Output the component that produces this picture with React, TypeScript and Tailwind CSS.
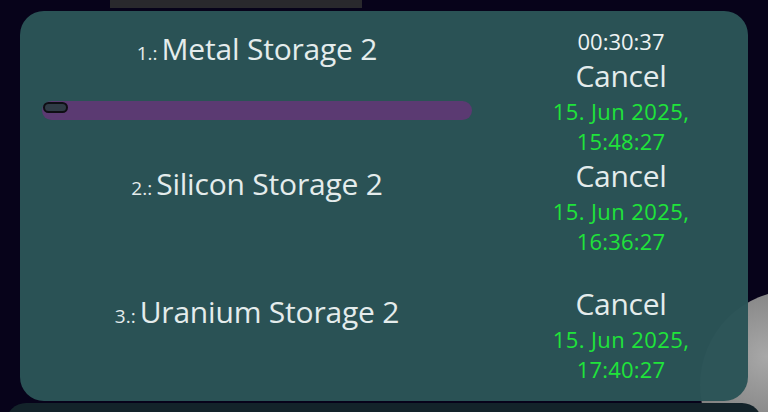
import React from 'react';

interface QueueItem {
  index: number;
  name: string;
  timer?: string;
  date: string;
  time: string;
  progress?: number;
}

const items: QueueItem[] = [
  { index: 1, name: 'Metal Storage 2', timer: '00:30:37', date: '15. Jun 2025,', time: '15:48:27', progress: 4 },
  { index: 2, name: 'Silicon Storage 2', date: '15. Jun 2025,', time: '16:36:27' },
  { index: 3, name: 'Uranium Storage 2', date: '15. Jun 2025,', time: '17:40:27' },
];

const QueueRow: React.FC<{ item: QueueItem; className?: string }> = ({ item, className }) => (
  <div className={`flex ${className ?? ''}`}>
    <div className="w-[430px] flex flex-col">
      <div className={`flex items-baseline justify-center text-[#e4ecec] ${item.timer ? 'pt-[5px]' : 'pt-[10px]'}`}>
        <span className="text-[19px] mr-[4px]">{item.index}.:</span>
        <span className="text-[30px] leading-[36px] tracking-[-0.2px]">{item.name}</span>
      </div>
      {item.progress !== undefined && (
        <div className="relative mt-[33px] h-[19px] w-[430px] rounded-full bg-[#5b3a72]">
          <div className="absolute left-[1px] top-[1px] h-[11px] w-[25px] rounded-full bg-[#2f3b45] border-2 border-[#0e0e14]" />
        </div>
      )}
    </div>
    <div className="ml-[22px] w-[254px] flex flex-col items-center">
      {item.timer && <div className="text-[22px] leading-[30px] text-[#eef3f3]">{item.timer}</div>}
      <button className="text-[30px] leading-[40px] text-[#e4ecec] tracking-[-0.3px]">Cancel</button>
      <div className="text-[22px] leading-[30px] tracking-[0.4px] text-[#1fe43a]">{item.date}</div>
      <div className="text-[22px] leading-[30px] tracking-[0.2px] text-[#1fe43a]">{item.time}</div>
    </div>
  </div>
);

export default function App() {
  return (
    <div
      className="relative w-[768px] h-[412px] overflow-hidden bg-[#07031a]"
      style={{ fontFamily: '"Open Sans", "Noto Sans", sans-serif' }}
    >
      {/* moon in the background */}
      <div className="absolute left-[700px] top-[290px] w-[190px] h-[190px] rounded-full bg-[radial-gradient(circle_at_35%_35%,#a8a8a8,#7c7c7c_50%,#4a4a4a_100%)]" />
      {/* header strip */}
      <div className="absolute left-[110px] top-0 w-[252px] h-[8px] bg-[#29292d]" />

      <div className="relative pt-[11px] px-[20px]">
        <div className="rounded-[24px] bg-[#2b5457]/[0.98] h-[390px] pl-[22px] pt-[15px]">
          {items.map((item, i) => (
            <QueueRow key={item.index} item={item} className={i === 2 ? 'mt-[28px]' : ''} />
          ))}
        </div>
      </div>
      <div className="relative mx-[6px] mt-[2px] h-[40px] rounded-t-[20px] bg-[#13232a]" />
    </div>
  );
}
